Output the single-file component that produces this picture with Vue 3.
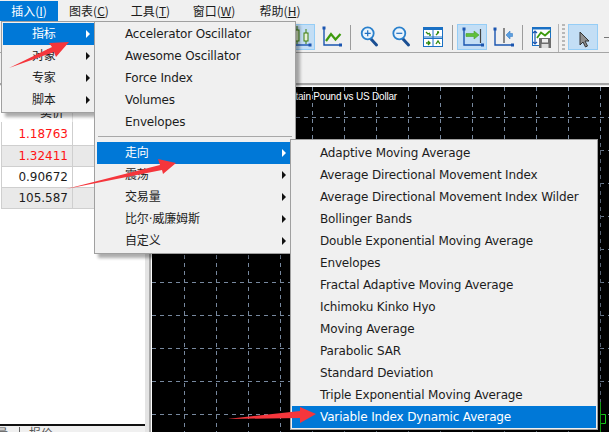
<script setup>
const rows = [
  { v: '1.18763', red: true, alt: false },
  { v: '1.32411', red: true, alt: true },
  { v: '0.90672', red: false, alt: false },
  { v: '105.587', red: false, alt: true }
]
const menuBar = [
  { t: '插入', k: 'I', w: 58, active: true },
  { t: '图表', k: 'C', w: 62 },
  { t: '工具', k: 'T', w: 61 },
  { t: '窗口', k: 'W', w: 66 },
  { t: '帮助', k: 'H', w: 66 }
]
const first = ['指标', '对象', '专家', '脚本']
const top5 = ['Accelerator Oscillator', 'Awesome Oscillator', 'Force Index', 'Volumes', 'Envelopes']
const groups = ['走向', '震荡', '交易量', '比尔·威廉姆斯', '自定义']
const trend = [
  'Adaptive Moving Average', 'Average Directional Movement Index', 'Average Directional Movement Index Wilder',
  'Bollinger Bands', 'Double Exponential Moving Average', 'Envelopes', 'Fractal Adaptive Moving Average',
  'Ichimoku Kinko Hyo', 'Moving Average', 'Parabolic SAR', 'Standard Deviation',
  'Triple Exponential Moving Average', 'Variable Index Dynamic Average'
]
const vLines = Array.from({ length: 14 }, (_, i) => 32.5 + i * 32)
const hLines = Array.from({ length: 10 }, (_, i) => 30.5 + i * 33)
</script>

<template>
  <div class="page">
    <nav class="menubar">
      <div v-for="m in menuBar" :key="m.k" class="mb" :class="{ on: m.active }" :style="{ width: m.w + 'px' }">
        {{ m.t }}(<u>{{ m.k }}</u>)
      </div>
    </nav>

    <div class="toolbar">
      <div class="tb sel first">
        <svg width="28" height="24" viewBox="0 0 28 24">
          <path d="M8 20H24" stroke="#1a55b0" stroke-width="1.4" />
          <rect x="22.5" y="18.5" width="3" height="3" fill="#1a55b0" />
          <path d="M11 1V19M20 4V19" stroke="#3e7d0a" />
          <rect x="9" y="5" width="4" height="11" fill="#d4e4c0" stroke="#3e7d0a" />
          <rect x="18" y="8" width="4" height="8" fill="#e6f0da" stroke="#3e7d0a" />
        </svg>
      </div>
      <div class="tb m1">
        <svg width="28" height="24" viewBox="0 0 28 24">
          <path d="M7 3V20H23" fill="none" stroke="#1a55b0" stroke-width="1.4" />
          <rect x="5.5" y="1.5" width="3" height="3" fill="#1a55b0" />
          <rect x="22" y="18.5" width="3" height="3" fill="#1a55b0" />
          <path d="M9 16L14 9L18.5 14.5L23.500 9" fill="none" stroke="#3d9a0c" stroke-width="2.2" />
        </svg>
      </div>
      <i class="sep m4"></i>
      <div class="tb m2">
        <svg width="28" height="24" viewBox="0 0 28 24">
          <path d="M17 14L22.500 20" stroke="#1b4f93" stroke-width="3" stroke-linecap="round" />
          <circle cx="13.7" cy="8.300" r="6" fill="#eaf4fc" stroke="#2a80cc" stroke-width="1.800" />
          <path d="M10.700 8.300H16.700M13.700 5.300V11.300" stroke="#1f6fc0" stroke-width="1.200" />
        </svg>
      </div>
      <div class="tb m2">
        <svg width="28" height="24" viewBox="0 0 28 24">
          <path d="M17 14L22.500 20" stroke="#1b4f93" stroke-width="3" stroke-linecap="round" />
          <circle cx="13.300" cy="8.300" r="6" fill="#eaf4fc" stroke="#2a80cc" stroke-width="1.800" />
          <path d="M10.300 8.300H16.300" stroke="#1f6fc0" stroke-width="1.200" />
        </svg>
      </div>
      <div class="tb m3">
        <svg width="28" height="24" viewBox="0 0 28 24">
          <rect x="4.500" y="2.500" width="19" height="19" fill="#fff" stroke="#1a70c4" />
          <path d="M4 4H24" stroke="#1a70c4" stroke-width="2" />
          <path d="M14 3V22M4 12H24M4 13.500H24" stroke="#1a70c4" />
          <path d="M7 7L9 9L11 8M10 10L12 10M17 10L20 7M20 7H18M7 18H11M9 16L11 18L9 20M17 19L19 16L21 19" fill="none" stroke="#2f8a10" stroke-width="1.300" />
        </svg>
      </div>
      <i class="sep m4"></i>
      <div class="tb sel m4">
        <svg width="28" height="24" viewBox="0 0 28 24">
          <path d="M6 4V20H24" fill="none" stroke="#1a55b0" stroke-width="1.400" />
          <rect x="4.500" y="2.500" width="3" height="3" fill="#1a55b0" />
          <rect x="23" y="18.500" width="3" height="3" fill="#1a55b0" />
          <path d="M22.500 4V18" stroke="#444" stroke-width="1.200" />
          <path d="M8 8.500H16V6L21 10L16 14V11.500H8Z" fill="#5fc03a" stroke="#4c9f2a" stroke-width=".6" />
        </svg>
      </div>
      <div class="tb m1">
        <svg width="28" height="24" viewBox="0 0 28 24">
          <path d="M6 4V20H23" fill="none" stroke="#1a55b0" stroke-width="1.400" />
          <rect x="4.500" y="2.500" width="3" height="3" fill="#1a55b0" />
          <rect x="22" y="18.500" width="3" height="3" fill="#1a55b0" />
          <path d="M15 3V18" stroke="#444" stroke-width="1.200" />
          <path d="M23.500 8.500H21V6L17 10L21 14V11.500H23.500Z" fill="#5b9fe0" stroke="#3d80c8" stroke-width=".6" />
        </svg>
      </div>
      <i class="sep m4"></i>
      <div class="tb m3">
        <svg width="28" height="24" viewBox="0 0 28 24">
          <rect x="5.500" y="2.500" width="18" height="18" fill="#fff" stroke="#1a70c4" />
          <path d="M5 3.500H24" stroke="#1a70c4" stroke-width="2" />
          <path d="M8 7V19M6 8L8 6L10 8M6 17L8 19L10 17" fill="none" stroke="#1a55b0" stroke-width="1.200" />
          <path d="M10 13L14 7.500L18 10.500L23 6" fill="none" stroke="#3d9a0c" stroke-width="1.800" />
          <path d="M12 13H24V23H12Z" fill="#6d6d6d" />
          <rect x="15" y="14" width="6" height="3.500" fill="#eee" />
          <rect x="14.500" y="19" width="7" height="4" fill="#ddd" />
        </svg>
      </div>
      <i class="sep light m2"></i>
      <i class="grip"></i>
      <div class="tb sel m3">
        <svg width="28" height="24" viewBox="0 0 28 24">
          <path d="M11 7V20L14 17L16.500 22L18.500 21L16 16H20Z" fill="#8f8f8f" stroke="#333" stroke-width="1" />
        </svg>
      </div>
      <i class="dash"></i>
    </div>

    <div class="subbar"></div>

    <main class="work">
      <aside class="side">
        <div class="table">
          <div class="row head"><span class="cell">卖价</span><span class="rest"></span></div>
          <div v-for="r in rows" :key="r.v" class="row" :class="{ alt: r.alt }">
            <span class="cell" :class="{ red: r.red }">{{ r.v }}</span><span class="rest"></span>
          </div>
        </div>
        <div class="tabs"><span class="tab-a">量</span><i class="tab-sep"></i><span class="tab-b">报价</span></div>
      </aside>
      <div class="sash"></div>
      <section class="chart">
        <svg class="grid" width="457" height="345">
          <path v-for="x in vLines" :key="'v' + x" :d="`M${x} 0V345`" stroke="#77889e" stroke-dasharray="4 4" />
          <path v-for="y in hLines" :key="'h' + y" :d="`M0 ${y}H457`" stroke="#77889e" stroke-dasharray="4 4" />
          <path d="M448.500 315V345M448.500 327.500H453.500V336.500H448.500" fill="none" stroke="#18d018" stroke-width="1" />
        </svg>
        <span class="title">Great Britain Pound vs US Dollar</span>
      </section>
    </main>

    <div class="menu m-a">
      <div v-for="(t, i) in first" :key="t" class="item" :class="{ hot: i === 0 }">
        <span>{{ t }}</span><b class="caret"></b>
      </div>
    </div>

    <div class="menu m-b">
      <div v-for="t in top5" :key="t" class="item"><span>{{ t }}</span></div>
      <div class="line"></div>
      <div v-for="(t, i) in groups" :key="t" class="item" :class="{ hot: i === 0 }">
        <span>{{ t }}</span><b class="caret"></b>
      </div>
    </div>

    <div class="menu m-c">
      <div v-for="(t, i) in trend" :key="t" class="item" :class="{ hot: i === 12 }"><span>{{ t }}</span></div>
    </div>

    <svg class="arrows" width="609" height="432" viewBox="0 0 609 432">
      <path d="M9 68L52 47L49 43L69 42L56 57L54 52Z" fill="#f5363c" />
      <path d="M66 189L160 165L158 159L176 163L163 174L162 170Z" fill="#f5363c" />
      <path d="M227 419L300 411V407L316 414L300 423V418Z" fill="#f5363c" />
    </svg>
  </div>
</template>

<style scoped>
.page {
  position: relative;
  width: 609px;
  height: 432px;
  overflow: hidden;
  display: flex;
  flex-direction: column;
  background: #f0f0f0;
  color: #1c1c1c;
  font-family: "DejaVu Sans", "Noto Sans CJK SC", sans-serif;
  font-size: 12px;
}
.menubar {
  display: flex;
  height: 21px;
  padding-top: 1px;
  box-sizing: border-box;
  background: #f0f0f0;
  flex: none;
}
.mb {
  text-align: center;
  line-height: 20px;
  font-family: "Noto Sans CJK SC", sans-serif;
}
.mb.on { background: #0078d7; color: #fff; }
.toolbar {
  height: 32px;
  flex: none;
  box-sizing: border-box;
  border-bottom: 1px solid #a5a5a5;
  display: flex;
  align-items: flex-start;
  padding: 3px 0 0 285px;
}
.tb {
  flex: none;
  width: 30px;
  height: 26px;
  box-sizing: border-box;
  border: 1px solid transparent;
}
.tb svg { display: block; }
.tb.sel { background: #c3def5; border-color: #95cdf6; }
.m1 { margin-left: 1px; }
.m2 { margin-left: 2px; }
.m3 { margin-left: 3px; }
.m4 { margin-left: 4px; }
.sep {
  flex: none;
  width: 1px;
  height: 25px;
  margin-top: 1px;
  background: #9c9c9c;
}
.sep.light { background: #b4b4b4; height: 28px; margin-top: 0; }
.grip {
  flex: none;
  width: 3px;
  height: 26px;
  margin-left: 3px;
  background: repeating-linear-gradient(to bottom, #b8b8b8 0 2px, transparent 2px 4px);
}
.dash {
  flex: none;
  width: 8px;
  height: 1px;
  margin: 13px 0 0 6px;
  background: #777;
}
.subbar {
  height: 32px;
  flex: none;
  border-bottom: 2px solid #a5a5a5;
  box-sizing: border-box;
}
.work {
  flex: 1;
  display: flex;
  min-height: 0;
  border-top: 1px solid #e8e8e8;
}
.side {
  width: 145px;
  flex: none;
  display: flex;
  flex-direction: column;
  background: #fff;
}
.table {
  flex: 1;
  padding-top: 16px;
  margin-left: 1px;
}
.row {
  display: flex;
  height: 20px;
  border-bottom: 1px solid #cfcfcf;
}
.row.head {
  height: 20px;
  border-bottom: 0;
  font-family: "Noto Sans CJK SC", sans-serif;
}
.row.alt { background: #e9e9e9; }
.cell {
  flex: none;
  width: 72px;
  box-sizing: border-box;
  border-right: 1px solid #cfcfcf;
  border-left: 1px solid #cfcfcf;
  padding-right: 4px;
  text-align: right;
  line-height: 20px;
}
.head .cell { border-left: 0; border-right-color: #e4e4e4; line-height: 20px; padding-right: 8px; }
.row:nth-child(2) { height: 23px; }
.row:nth-child(2) .cell { line-height: 25px; }
.rest { flex: 1; }
.red { color: #ff1414; }
.tabs {
  height: 6px;
  flex: none;
  border-top: 2px solid #111;
  background: #f0f0f0;
  display: flex;
  overflow: hidden;
  line-height: 14px;
  font-family: "Noto Sans CJK SC", sans-serif;
  color: #555;
}
.tab-a { margin-left: -4px; width: 14px; }
.tab-sep { width: 1px; height: 6px; background: #666; margin: 1px 9px 0 9px; }
.sash {
  width: 7px;
  flex: none;
  box-sizing: border-box;
  background: #e4e4e4;
  border-right: 1px solid #fff;
  border-left: 0;
  box-shadow: inset -2px 0 0 #a8a8a8;
}
.chart {
  flex: 1;
  position: relative;
  background: #000;
  border-top: 1px solid #fff;
  overflow: hidden;
}
.grid { display: block; }
.title {
  position: absolute;
  right: 212px;
  top: 4px;
  color: #fff;
  font-family: "Liberation Sans", sans-serif;
  font-size: 10px;
  letter-spacing: -.2px;
  white-space: nowrap;
}
.menu {
  position: absolute;
  box-sizing: border-box;
  background: #f0f0f0;
  border: 1px solid #a0a0a0;
  box-shadow: 4px 4px 3px rgba(0, 0, 0, .32);
}
.m-a { left: 1px; top: 21px; width: 94px; height: 92px; padding: 1px 0 0 1px; }
.m-b { left: 94px; top: 21px; width: 202px; height: 233px; padding: 1px 0 0 2px; }
.m-c { left: 290px; top: 139px; width: 308px; height: 291px; padding: 2px 1px 0 1px; }
.item {
  position: relative;
  height: 22px;
  line-height: 22px;
  padding-left: 28px;
  white-space: nowrap;
  letter-spacing: -.14px;
}
.m-a .item { padding-left: 29px; }
.item.hot { background: #0078d7; color: #fff; }
.caret {
  position: absolute;
  right: 4px;
  top: 7px;
  width: 0;
  height: 0;
  border-style: solid;
  border-width: 4px 0 4px 4px;
  border-color: transparent transparent transparent #111;
}
.m-b .caret { right: 9px; }
.hot .caret { border-left-color: #fff; }
.line {
  height: 1px;
  margin: 3px 3px 5px 1px;
  background: #a8a8a8;
}
.arrows {
  position: absolute;
  left: 0;
  top: 0;
  pointer-events: none;
}
</style>
<style>
html, body { margin: 0; overflow: hidden; }
</style>
